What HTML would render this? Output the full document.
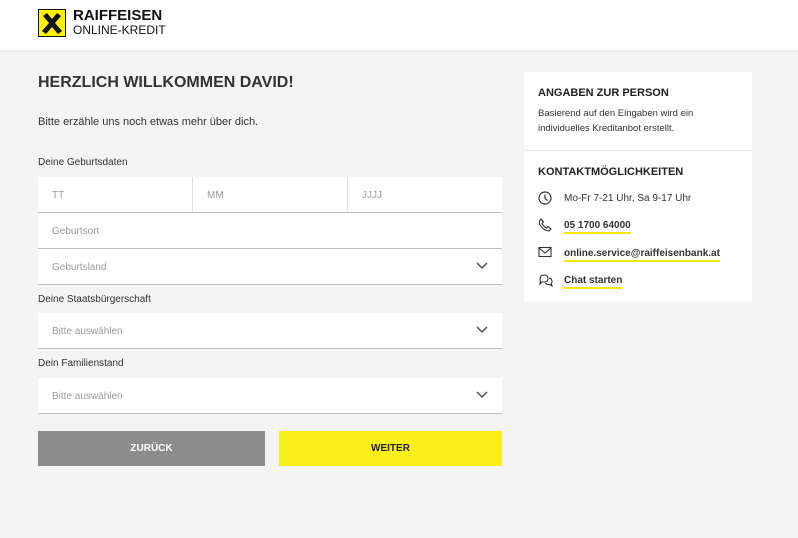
<!DOCTYPE html>
<html><head><meta charset="utf-8"><style>
*{margin:0;padding:0;box-sizing:border-box}
body{width:798px;height:538px;background:#f4f4f4;font-family:"Liberation Sans",sans-serif;color:#222;position:relative;overflow:hidden}
.hdr{position:absolute;left:0;top:0;width:798px;height:50px;background:#fff;box-shadow:0 1px 3px rgba(0,0,0,.08)}
.abs{position:absolute}
.inp{position:absolute;background:#fff;border-bottom:1px solid #bdbdbd;height:36px;font-size:10px;color:#9a9a9a;padding:13px 14px 0}
.lbl{position:absolute;font-size:10px;color:#333}
.chev{position:absolute;right:14px;top:13px}
.btn{position:absolute;top:431px;height:35px;font-size:10px;font-weight:bold;text-align:center;line-height:36px}
.rp{position:absolute;left:524px;top:72px;width:228px;height:229px;background:#fff}
.h{font-size:11px;font-weight:bold;text-transform:uppercase;color:#222}
.ci{position:absolute;left:14px;font-size:10px;color:#333}
.ci span.u{border-bottom:2px solid #f5e800;padding-bottom:1px;font-weight:bold}
.ci svg{position:absolute;left:0;top:-2px}
.ci .t{position:absolute;left:26px;white-space:nowrap;top:0}
</style></head><body>
<div class="hdr">
<svg class="abs" style="left:38px;top:9px" width="28" height="28" viewBox="0 0 28 28"><rect x="0.5" y="0.5" width="27" height="27" fill="#fff200" stroke="#111"/><path d="M5 7 L9 4 L14 10 L19 4 L23 7 L17 14 L24 22 L20 25 L14 18 L8 25 L4 22 L11 14 Z" fill="#111"/></svg>
<div class="abs" style="left:73px;top:8px;font-size:15px;font-weight:bold;line-height:15px;color:#111">RAIFFEISEN</div>
<div class="abs" style="left:73px;top:24px;font-size:12px;line-height:13px;color:#111">ONLINE-KREDIT</div>
</div>
<div class="abs" style="left:38px;top:74px;font-size:16px;font-weight:bold;color:#333">HERZLICH WILLKOMMEN DAVID!</div>
<div class="abs" style="left:38px;top:116px;font-size:11px;color:#333">Bitte erzähle uns noch etwas mehr über dich.</div>
<div class="lbl" style="left:38px;top:157px">Deine Geburtsdaten</div>
<div class="inp" style="left:38px;top:177px;width:155px;border-right:1px solid #ddd">TT</div>
<div class="inp" style="left:193px;top:177px;width:155px;border-right:1px solid #ddd">MM</div>
<div class="inp" style="left:348px;top:177px;width:154px">JJJJ</div>
<div class="inp" style="left:38px;top:213px;width:464px">Geburtsort</div>
<div class="inp" style="left:38px;top:249px;width:464px">Geburtsland<svg class="chev" width="12" height="8" viewBox="0 0 12 8"><path d="M1 1 L6 6 L11 1" stroke="#444" fill="none" stroke-width="1.3"/></svg></div>
<div class="lbl" style="left:38px;top:294px">Deine Staatsbürgerschaft</div>
<div class="inp" style="left:38px;top:313px;width:464px">Bitte auswählen<svg class="chev" width="12" height="8" viewBox="0 0 12 8"><path d="M1 1 L6 6 L11 1" stroke="#444" fill="none" stroke-width="1.3"/></svg></div>
<div class="lbl" style="left:38px;top:358px">Dein Familienstand</div>
<div class="inp" style="left:38px;top:378px;width:464px">Bitte auswählen<svg class="chev" width="12" height="8" viewBox="0 0 12 8"><path d="M1 1 L6 6 L11 1" stroke="#444" fill="none" stroke-width="1.3"/></svg></div>
<div class="btn" style="left:38px;width:227px;background:#8c8c8c;color:#fff">ZURÜCK</div>
<div class="btn" style="left:279px;width:223px;background:#f8f018;color:#222">WEITER</div>
<div class="rp">
<div class="abs h" style="left:14px;top:15px">Angaben zur Person</div>
<div class="abs" style="left:14px;top:34px;font-size:9.5px;line-height:15px;color:#333;width:200px">Basierend auf den Eingaben wird ein individuelles Kreditanbot erstellt.</div>
<div class="abs" style="left:0;top:78px;width:228px;border-top:1px solid #e2e2e2"></div>
<div class="abs h" style="left:14px;top:94px">Kontaktmöglichkeiten</div>
<div class="ci" style="top:121px"><svg width="14" height="14" viewBox="0 0 14 14"><circle cx="7" cy="7" r="6" stroke="#333" fill="none" stroke-width="1.2"/><path d="M7 3.5V7.5L9.5 9.5" stroke="#333" fill="none" stroke-width="1.2"/></svg><span class="t">Mo-Fr 7-21 Uhr, Sa 9-17 Uhr</span></div>
<div class="ci" style="top:148px"><svg width="14" height="14" viewBox="0 0 14 14"><path d="M3 1 L5.5 4 L4 5.5 Q5.5 8.5 8.5 10 L10 8.5 L13 11 L11 13 Q5 12.5 1.5 6 Q1 3 3 1Z" stroke="#333" fill="none" stroke-width="1.1"/></svg><span class="t u">05 1700 64000</span></div>
<div class="ci" style="top:176px"><svg width="14" height="12" viewBox="0 0 14 12"><rect x="1" y="1.5" width="12" height="9" stroke="#333" fill="none" stroke-width="1.1"/><path d="M1 2 L7 7 L13 2" stroke="#333" fill="none" stroke-width="1.1"/></svg><span class="t u">online.service@raiffeisenbank.at</span></div>
<div class="ci" style="top:203px"><svg width="16" height="14" viewBox="0 0 16 14"><path d="M2 6 Q2 2 6 2 Q10 2 10 5.5 Q10 9 6 9 L4 9 L2 11 L2.5 8.5 Q2 7.5 2 6Z" stroke="#333" fill="none" stroke-width="1.1"/><path d="M11 5 Q14 5.5 14 8.5 Q14 10 13.3 10.8 L14 13 L12 11.5 Q8.5 12 7.5 10" stroke="#333" fill="none" stroke-width="1.1"/></svg><span class="t u">Chat starten</span></div>
</div>
</body></html>
